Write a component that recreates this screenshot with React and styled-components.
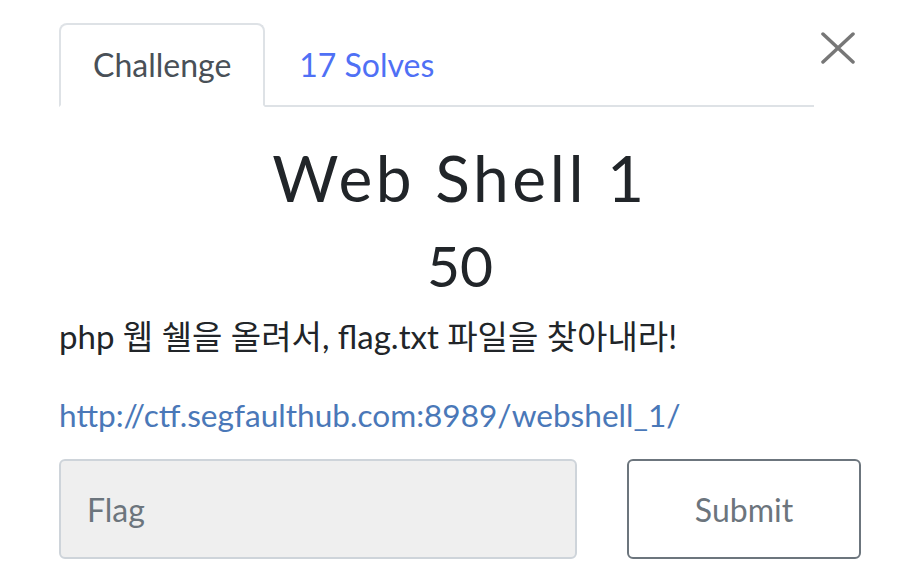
import React from 'react';
import styled, {createGlobalStyle} from 'styled-components';

const GlobalStyle = createGlobalStyle`
  body {
    margin: 0;
    background: #fff;
    font-family: Lato, "Noto Sans CJK KR", sans-serif;
    color: #212529;
  }
`

const Modal = styled.div`
  width: 802px;
  padding: 23px 0 0 59px;
`

const Header = styled.div`
  display: flex;
  align-items: flex-start;
`

const TabList = styled.ul`
  flex: 1;
  display: flex;
  list-style: none;
  margin: 0;
  padding: 0;
  border-bottom: 2px solid #dee2e6;
`

const Tab = styled.li`
  margin-bottom: -2px;
  padding: 16px 32px;
  font-size: 32px;
  line-height: 48px;
  border: 2px solid ${p => p.$active ? '#dee2e6' : 'transparent'};
  border-bottom-color: ${p => p.$active ? '#fff' : 'transparent'};
  border-radius: 8px 8px 0 0;
  background: ${p => p.$active ? '#fff' : 'transparent'};
  color: ${p => p.$active ? '#495057' : '#4f70f5'};
`

const CloseButton = styled.button`
  width: 47px;
  height: 60px;
  padding: 9px 0 0;
  border: 0;
  background: none;
  display: flex;
  align-items: flex-start;
  justify-content: center;
  svg { display: block; }
`

const Title = styled.h2`
  margin: 33px 0 0;
  text-align: center;
  font-size: 64px;
  font-weight: 400;
  line-height: 1.2;
  letter-spacing: 3.6px;
  color: #212529;
`

const Value = styled.h3`
  margin: 14px 0 0;
  text-align: center;
  font-size: 57px;
  font-weight: 400;
  line-height: 1.2;
  color: #212529;
`

const Description = styled.p`
  margin: 13px 0 0;
  font-size: 33px;
  line-height: 1.5;
  color: #212529;
`

const ChallengeLink = styled.a`
  display: block;
  margin-top: 30px;
  font-size: 31.6px;
  line-height: 1.5;
  color: #4a78b8;
  text-decoration: none;
`

const SubmitRow = styled.form`
  display: grid;
  grid-template-columns: 1fr 234px;
  gap: 50px;
  margin-top: 20px;
`

const FlagInput = styled.input`
  box-sizing: border-box;
  height: 100px;
  padding: 0 26px;
  font-family: Lato, sans-serif;
  font-size: 32px;
  background: #efefef;
  border: 2px solid #ced4da;
  border-radius: 6px;
  color: #495057;
  outline: none;
  &::placeholder { color: #6c757d; }
`

const SubmitButton = styled.button`
  box-sizing: border-box;
  height: 100px;
  font-family: Lato, sans-serif;
  font-size: 32px;
  background: #fff;
  border: 2px solid #6c757d;
  border-radius: 6px;
  color: #6c757d;
`

const App = () => (
  <>
    <GlobalStyle />
    <Modal>
      <Header>
        <TabList>
          <Tab $active>Challenge</Tab>
          <Tab>17 Solves</Tab>
        </TabList>
        <CloseButton aria-label="Close">
          <svg width="34" height="32" viewBox="0 0 34 32">
            <path d="M2 2 L32 30 M32 2 L2 30" stroke="#777" strokeWidth="3.5" strokeLinecap="round" />
          </svg>
        </CloseButton>
      </Header>
      <Title>Web Shell 1</Title>
      <Value>50</Value>
      <Description>php 웹 쉘을 올려서, flag.txt 파일을 찾아내라!</Description>
      <ChallengeLink href="#">http://ctf.segfaulthub.com:8989/webshell_1/</ChallengeLink>
      <SubmitRow onSubmit={e => e.preventDefault()}>
        <FlagInput placeholder="Flag" />
        <SubmitButton type="submit">Submit</SubmitButton>
      </SubmitRow>
    </Modal>
  </>
);

export default App;
